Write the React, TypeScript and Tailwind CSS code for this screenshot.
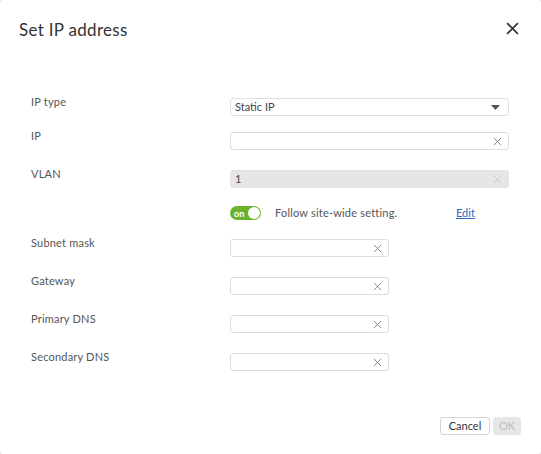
import React from "react";

const font = { fontFamily: "Lato, 'Noto Sans', sans-serif" };

function ClearIcon({ light }: { light?: boolean }) {
  return (
    <svg width="9" height="9" viewBox="0 0 10 10" className={light ? "text-[#c8c8c8]" : "text-[#8a8a8a]"}>
      <path d="M1 1L9 9M9 1L1 9" stroke="currentColor" strokeWidth="1.1" fill="none" />
    </svg>
  );
}

function TextField({ wide, value, disabled }: { wide?: boolean; value?: string; disabled?: boolean }) {
  return (
    <div
      className={`flex h-[18px] items-center justify-between rounded-[3px] border px-[4px] pr-[6px] ${
        wide ? "w-[279px]" : "w-[159px]"
      } ${disabled ? "border-[#e4e4e4] bg-[#e6e6e6]" : "border-[#dcdcdc] bg-white"}`}
    >
      <span className="text-[11px] text-[#444]">{value ?? ""}</span>
      <ClearIcon light={disabled} />
    </div>
  );
}

function Row({ label, children, mt }: { label: string; children: React.ReactNode; mt: string }) {
  return (
    <div className={`flex items-start ${mt}`}>
      <div className="w-[199px] -mt-[3px] text-[11px] leading-[14px] tracking-[0.2px] text-[#555]">{label}</div>
      {children}
    </div>
  );
}

export default function App() {
  return (
    <div className="h-[454px] w-[541px] bg-[#e2e2e2]" style={font}>
      <div className="relative flex h-full w-full flex-col rounded-[3px] bg-white">
        <div className="flex items-start justify-between pl-[19px] pr-[22px] pt-[19px]">
          <h1 className="text-[17px] leading-[22px] tracking-[0.3px] text-[#333]">Set IP address</h1>
          <svg width="13" height="13" viewBox="0 0 12 12" className="mt-[3px] text-[#333]">
            <path d="M1 1L11 11M11 1L1 11" stroke="currentColor" strokeWidth="1.5" fill="none" />
          </svg>
        </div>

        <div className="pl-[31px]">
          <Row label="IP type" mt="mt-[57px]">
            <div className="flex h-[18px] w-[279px] items-center justify-between rounded-[3px] border border-[#e0e0e0] bg-white pl-[4px] pr-[8px]">
              <span className="text-[11px] text-[#444]">Static IP</span>
              <svg width="9" height="5" viewBox="0 0 9 5" className="text-[#555]">
                <path d="M0 0H9L4.5 5Z" fill="currentColor" />
              </svg>
            </div>
          </Row>
          <Row label="IP" mt="mt-[16px]">
            <TextField wide />
          </Row>
          <Row label="VLAN" mt="mt-[20px]">
            <TextField wide value="1" disabled />
          </Row>

          <div className="mt-[18px] flex h-[14px] items-center pl-[199px]">
            <div className="flex h-[14px] w-[31px] items-center justify-between rounded-full bg-[#6ab42d] pl-[4px] pr-[1px]">
              <span className="text-[9px] font-bold leading-none text-white">on</span>
              <span className="h-[12px] w-[12px] rounded-full bg-white" />
            </div>
            <span className="ml-[14px] w-[181px] text-[11px] tracking-[0.2px] text-[#555]">Follow site-wide setting.</span>
            <span className="text-[11px] text-[#2d6ac4] underline">Edit</span>
          </div>

          <Row label="Subnet mask" mt="mt-[19px]">
            <TextField />
          </Row>
          <Row label="Gateway" mt="mt-[20px]">
            <TextField />
          </Row>
          <Row label="Primary DNS" mt="mt-[20px]">
            <TextField />
          </Row>
          <Row label="Secondary DNS" mt="mt-[20px]">
            <TextField />
          </Row>
        </div>

        <div className="mt-[46px] flex justify-end gap-[3px] pr-[20px]">
          <button className="h-[18px] w-[50px] rounded-[3px] border border-[#d6d6d6] bg-white text-[11px] text-[#333]">
            Cancel
          </button>
          <button className="h-[18px] w-[28px] rounded-[3px] bg-[#e6e6e6] text-[11px] text-[#bdbdbd]">OK</button>
        </div>
      </div>
    </div>
  );
}
